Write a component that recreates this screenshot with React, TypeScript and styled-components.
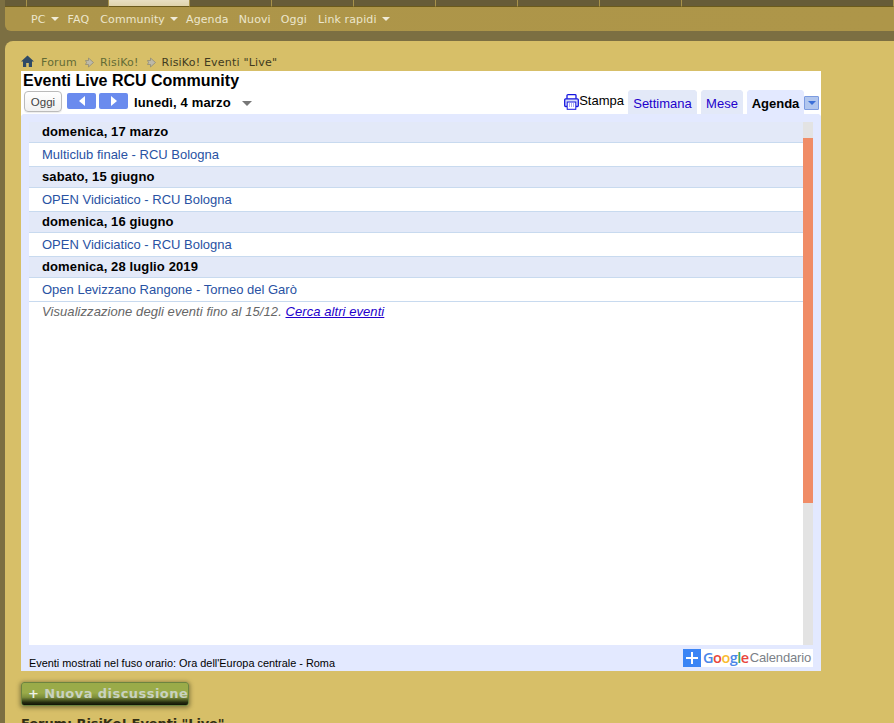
import React from "react";
import styled, { createGlobalStyle } from "styled-components";

const Global = createGlobalStyle`
  html, body { margin: 0; padding: 0; height: 723px; overflow: hidden; background: #7c6f42; }
  #root { height: 723px; overflow: hidden; }
`;
const Page = styled.div`
  width: 894px; height: 723px; overflow: hidden; padding-left: 5px; box-sizing: border-box;
  font-family: "DejaVu Sans", sans-serif;
`;
const TopTabs = styled.div`display: flex; height: 7px;`;
const TopTab = styled.div<{ $active?: boolean; $w: number }>`
  flex: 0 0 ${p => p.$w}px; box-sizing: border-box; height: 7px;
  background: ${p => (p.$active ? "linear-gradient(#e8dfc2,#dfd3ac)" : "#675c38")};
  border-right: 1px solid #a8924a; border-bottom: 1px solid #6b5a1c;
`;
const Nav = styled.nav`
  height: 24px; background: linear-gradient(90deg,#ad9549,#ae9649); border-bottom-left-radius: 6px;
  display: flex; align-items: center; padding-left: 26px; box-sizing: border-box;
  font-size: 11px; letter-spacing: 0.12px; color: #ece6cc;
`;
const NavItem = styled.span<{ $gap: number }>`
  display: inline-flex; align-items: center; margin-right: ${p => p.$gap}px; white-space: nowrap;
`;
const Caret = styled.i`
  display: inline-block; margin-left: 5px; width: 0; height: 0;
  border-left: 4px solid transparent; border-right: 4px solid transparent; border-top: 4px solid #f0ebd8;
`;
const Panel = styled.main`
  margin-top: 10px; height: 700px; background: #d7bf68; border-top-left-radius: 8px;
  padding: 12px 0 0 16px; box-sizing: border-box;
`;
const Crumbs = styled.div`
  height: 18px; display: flex; align-items: center; font-size: 11px; letter-spacing: 0.2px; color: #3f3a20;
`;
const CrumbLink = styled.span`color: #636b35;`;
const CrumbArrow = styled.svg`width: 10px; height: 11px; margin: 0 6px 0 7px;`;
const HomeIcon = styled.svg`width: 13px; height: 12px; margin: -2px 7px 0 0;`;
const Frame = styled.section`
  width: 800px; height: 600px; background: #fff; display: flex; flex-direction: column;
  font-family: "Liberation Sans", Arial, sans-serif; color: #000;
`;
const Title = styled.h1`
  margin: 0; height: 20px; line-height: 20px; padding-left: 2px; font-size: 16px; font-weight: bold;
`;
const Toolbar = styled.div`
  height: 23px; display: flex; align-items: flex-start; padding-left: 3px; box-sizing: border-box; position: relative;
`;
const TodayBtn = styled.button`
  width: 38px; height: 21px; padding: 0; margin-top: 0; box-sizing: border-box; background: linear-gradient(#fff,#f1f1f1);
  border: 1px solid #bbb; border-radius: 4px; box-shadow: 0 1px 1px rgba(0,0,0,.08);
  font: 11.5px "Liberation Sans", Arial, sans-serif; color: #444;
`;
const ArrowBtn = styled.button<{ $ml: number }>`
  width: 29px; height: 16px; margin: 2px 0 0 ${p => p.$ml}px; padding: 0; border: 0; border-radius: 2px; background: #6a8bee;
  display: flex; align-items: center; justify-content: center;
`;
const DateLabel = styled.span`
  margin: 4px 0 0 6px; font-size: 13px; font-weight: bold; line-height: 16px; white-space: nowrap; letter-spacing: 0.14px;
`;
const DateCaret = styled.i`
  display: block; margin: 10px 0 0 11px; width: 0; height: 0;
  border-left: 5px solid transparent; border-right: 5px solid transparent; border-top: 5px solid #777;
`;
const RightTools = styled.div`
  margin-left: auto; display: flex; align-items: flex-start; height: 23px;
`;
const PrintBtn = styled.span`
  display: flex; align-items: flex-start; font-size: 13px; line-height: 16px; margin: 2px 4px 0 0;
`;
const PrintIcon = styled.svg`width: 15px; height: 16px; margin: 1px 0 0 0;`;
const Tab = styled.span<{ $active?: boolean; $w: number; $ml: number }>`
  width: ${p => p.$w}px; margin-left: ${p => p.$ml}px; height: 24px; margin-top: -1px; box-sizing: border-box;
  text-align: center; line-height: 27px; font-size: 13px;
  background: ${p => (p.$active ? "#e3e9ff" : "#e3e9f8")};
  color: ${p => (p.$active ? "#000" : "#2200cc")};
  font-weight: ${p => (p.$active ? "bold" : "normal")};
  clip-path: polygon(2px 0, calc(100% - 2px) 0, 100% 2px, 100% 100%, 0 100%, 0 2px);
`;
const MenuBtn = styled.span`
  width: 15px; height: 14px; box-sizing: border-box; margin: 5px 2px 0 0; background: #b1c6ee; border: 1px solid #7c9be0; border-radius: 1px;
  display: flex; align-items: center; justify-content: center;
  &::after { content: ""; border-left: 4px solid transparent; border-right: 4px solid transparent; border-top: 4px solid #3a6fd8; }
`;
const CalBody = styled.div`
  flex: 1; background: #e3e9ff; display: flex; flex-direction: column; min-height: 0;
  clip-path: polygon(0 2px, 2px 0, calc(100% - 2px) 0, 100% 2px, 100% 100%, 0 100%);
`;
const ViewArea = styled.div`
  height: 523px; margin: 8px 8px 0 8px; display: flex; background: #fff;
`;
const Agenda = styled.div`flex: 1; min-width: 0; font-size: 13px;`;
const DayHead = styled.div`
  height: 21px; line-height: 19px; box-sizing: border-box; padding-left: 13px; background: #e3e9f8; font-weight: bold;
  letter-spacing: 0.12px; border-bottom: 1px solid #c8daef;
`;
const EventRow = styled.div`
  height: 24px; line-height: 23px; box-sizing: border-box; padding-left: 13px; color: #2952a3; border-bottom: 1px solid #c8daef;
`;
const Note = styled.div`
  padding-left: 13px; line-height: 20px; font-style: italic; color: #666; letter-spacing: 0.07px;
`;
const NoteLink = styled.a`color: #2200cc; text-decoration: underline;`;
const Track = styled.div`width: 10px; background: #e3e3e3; padding-top: 16px; box-sizing: border-box;`;
const Thumb = styled.div`height: 365px; background: #f08c66;`;
const Footer = styled.div`
  flex: 1; display: flex; justify-content: space-between; padding: 4px 8px 0 8px; min-height: 0;
`;
const Zone = styled.span`font-size: 10.9px; line-height: 14px; margin-top: 7px; white-space: nowrap;`;
const GBadge = styled.span`display: flex; height: 18px; background: #fff; width: 130px;`;
const GPlus = styled.span`
  width: 18px; height: 18px; background: #3b85f5; position: relative; flex: none;
  &::before { content: ""; position: absolute; left: 3px; right: 3px; top: 8px; height: 2px; background: #fff; }
  &::after { content: ""; position: absolute; top: 3px; bottom: 3px; left: 8px; width: 2px; background: #fff; }
`;
const GWord = styled.span`
  font-family: "Open Sans", "Liberation Sans", sans-serif; font-size: 14.5px; font-weight: 600; line-height: 18px; margin-left: 2px; letter-spacing: -0.5px; white-space: nowrap;
`;
const GC = styled.span<{ $c: string }>`color: ${p => p.$c};`;
const GCal = styled.span`font-size: 13px; line-height: 18px; color: #7b7f88; margin-left: 1px; letter-spacing: -0.15px; white-space: nowrap;`;
const NewBtn = styled.div`
  margin-top: 11px; width: 168px; height: 24px; box-sizing: border-box; border-radius: 3px; border: 1px solid #6c8440;
  background: linear-gradient(#9aab49 0%,#9aab49 45%,#7d8f3c 65%,#252c10 88%,#0f1206 100%);
  box-shadow: 0 1px 4px 1px rgba(60,60,30,.55);
  color: #c9d2c0; font-size: 13px; font-weight: bold; letter-spacing: .45px; line-height: 21px; padding-left: 6px; white-space: nowrap;
`;
const Plus = styled.span`color: #eef0e6;`;
const ForumTitle = styled.h2`
  margin: 10px 0 0; font-size: 13px; line-height: 16px; font-weight: bold; color: #332e14; white-space: nowrap;
  font-family: "DejaVu Sans", sans-serif; letter-spacing: -0.1px;
`;

const days: [string, string][] = [
  ["domenica, 17 marzo", "Multiclub finale - RCU Bologna"],
  ["sabato, 15 giugno", "OPEN Vidiciatico - RCU Bologna"],
  ["domenica, 16 giugno", "OPEN Vidiciatico - RCU Bologna"],
  ["domenica, 28 luglio 2019", "Open Levizzano Rangone - Torneo del Garò"],
];

const Arrow = () => (
  <CrumbArrow viewBox="0 0 10 11">
    <path d="M4.5 1 L9.5 5.5 L4.5 10 V7.5 H1.5 L2.5 5.5 L1.5 3.5 H4.5 Z" fill="#bdb9a8" stroke="#8a8672" strokeWidth=".7" />
  </CrumbArrow>
);

export default function App() {
  return (
    <Page>
      <Global />
      <TopTabs>
        <TopTab $w={22} />
        <TopTab $w={82} />
        <TopTab $w={81} $active />
        {[0, 1, 2, 3, 4, 5].map(i => <TopTab key={i} $w={82} />)}
        <TopTab $w={212} />
      </TopTabs>
      <Nav>
        <NavItem $gap={9}>PC<Caret /></NavItem>
        <NavItem $gap={11}>FAQ</NavItem>
        <NavItem $gap={8}>Community<Caret /></NavItem>
        <NavItem $gap={10}>Agenda</NavItem>
        <NavItem $gap={10}>Nuovi</NavItem>
        <NavItem $gap={11}>Oggi</NavItem>
        <NavItem $gap={0}>Link rapidi<Caret /></NavItem>
      </Nav>
      <Panel>
        <Crumbs>
          <HomeIcon viewBox="0 0 13 12">
            <path d="M6.5 .5 L13 6.5 H11 V12 H7.8 V8 H5.2 V12 H2 V6.5 H0 Z" fill="#2f4a66" />
          </HomeIcon>
          <CrumbLink>Forum</CrumbLink>
          <Arrow />
          <CrumbLink>RisiKo!</CrumbLink>
          <Arrow />
          <span>RisiKo! Eventi "Live"</span>
        </Crumbs>
        <Frame>
          <Title>Eventi Live RCU Community</Title>
          <Toolbar>
            <TodayBtn>Oggi</TodayBtn>
            <ArrowBtn $ml={5} aria-label="prev"><svg width="6" height="10" viewBox="0 0 6 10"><path d="M6 0 V10 L0 5 Z" fill="#fff" /></svg></ArrowBtn>
            <ArrowBtn $ml={3} aria-label="next"><svg width="6" height="10" viewBox="0 0 6 10"><path d="M0 0 V10 L6 5 Z" fill="#fff" /></svg></ArrowBtn>
            <DateLabel>lunedì, 4 marzo</DateLabel>
            <DateCaret />
            <RightTools>
              <PrintBtn>
                <PrintIcon viewBox="0 0 15 16">
                  <path d="M3 5 V1.5 Q3 .7 4 .7 H11 Q12 .7 12 1.5 V5" fill="none" stroke="#1616e0" strokeWidth="1.3" />
                  <path d="M3 12.5 H1.6 Q.7 12.5 .7 11.5 V5.8 Q.7 4.8 1.6 4.8 H13.4 Q14.3 4.8 14.3 5.8 V11.5 Q14.3 12.5 13.4 12.5 H12" fill="#d8def8" stroke="#1616e0" strokeWidth="1.3" />
                  <rect x="3.2" y="8" width="8.6" height="7.3" fill="#fff" stroke="#1616e0" />
                  <path d="M5 10 H10.5 M5 12 H10.5" stroke="#5a5ae0" strokeDasharray="1 1" />
                </PrintIcon>
                Stampa
              </PrintBtn>
              <Tab $w={69} $ml={0}>Settimana</Tab>
              <Tab $w={42} $ml={4}>Mese</Tab>
              <Tab $w={57} $ml={4} $active>Agenda</Tab>
              <MenuBtn />
            </RightTools>
          </Toolbar>
          <CalBody>
            <ViewArea>
              <Agenda>
                {days.map(([d, e]) => (
                  <React.Fragment key={d}>
                    <DayHead>{d}</DayHead>
                    <EventRow>{e}</EventRow>
                  </React.Fragment>
                ))}
                <Note>
                  Visualizzazione degli eventi fino al 15/12. <NoteLink>Cerca altri eventi</NoteLink>
                </Note>
              </Agenda>
              <Track><Thumb /></Track>
            </ViewArea>
            <Footer>
              <Zone>Eventi mostrati nel fuso orario: Ora dell'Europa centrale - Roma</Zone>
              <GBadge>
                <GPlus />
                <GWord>
                  <GC $c="#4a86e8">G</GC><GC $c="#e8453c">o</GC><GC $c="#f9bb2d">o</GC><GC $c="#4a86e8">g</GC><GC $c="#3aa757">l</GC><GC $c="#e8453c">e</GC>
                </GWord>
                <GCal>Calendario</GCal>
              </GBadge>
            </Footer>
          </CalBody>
        </Frame>
        <NewBtn><Plus>+</Plus> Nuova discussione</NewBtn>
        <ForumTitle>Forum: RisiKo! Eventi "Live"</ForumTitle>
      </Panel>
    </Page>
  );
}
